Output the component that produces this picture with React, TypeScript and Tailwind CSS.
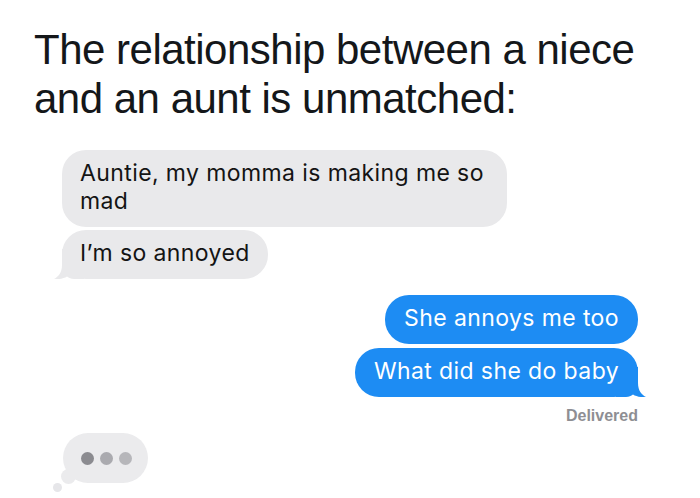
import React from "react";

const GRAY = "#e9e9eb";
const BLUE = "#1d8cf3";

function Tail({ color, side }: { color: string; side: "left" | "right" }) {
  return (
    <svg
      className={`absolute bottom-0 w-[30px] h-[30px] ${side === "left" ? "left-[-8px]" : "right-[-8px] -scale-x-100"}`}
      viewBox="0 0 30 30"
    >
      <path d="M8 0H30V30H20C17 30 15 29 13 27.5C10 29.5 5 30.5 0 30C4 28 8 24 8 16Z" fill={color} />
    </svg>
  );
}

function Received({ children, tail, className = "" }: { children: React.ReactNode; tail?: boolean; className?: string }) {
  return (
    <div className={`relative self-start rounded-[24px] bg-[#e9e9eb] px-[18px] pt-[9px] pb-[12px] text-[#141414] ${className}`}>
      {tail && <Tail color={GRAY} side="left" />}
      <span className="relative">{children}</span>
    </div>
  );
}

function Sent({ children, tail, className = "" }: { children: React.ReactNode; tail?: boolean; className?: string }) {
  return (
    <div className={`relative self-end rounded-[24px] bg-[#1d8cf3] px-[19px] pt-[9px] pb-[12px] text-white ${className}`}>
      {tail && <Tail color={BLUE} side="right" />}
      <span className="relative">{children}</span>
    </div>
  );
}

export default function App() {
  return (
    <div className="w-[700px] h-[498px] overflow-hidden bg-white">
      <h1
        className="pl-[34px] pt-[25px] text-[42px] leading-[49px] tracking-[-0.5px] text-[#14171a] font-normal"
        style={{ fontFamily: '"Liberation Sans", Arial, sans-serif' }}
      >
        The relationship between a niece
        <br />
        and an aunt is unmatched:
      </h1>

      <div
        className="flex flex-col px-[62px] pt-[27px] text-[23px] leading-[28px] tracking-[0.4px]"
        style={{ fontFamily: 'Inter, "Noto Sans", sans-serif' }}
      >
        <Received className="w-[445px]">Auntie, my momma is making me so mad</Received>
        <Received tail className="mt-[3px]">I’m so annoyed</Received>

        <Sent className="mt-[16px]">She annoys me too</Sent>
        <Sent tail className="mt-[4px]">What did she do baby</Sent>

        <div
          className="self-end mt-[9px] text-[16px] leading-[20px] font-bold text-[#8e8e93] tracking-normal"
          style={{ fontFamily: '"Liberation Sans", Arial, sans-serif' }}
        >
          Delivered
        </div>

        {/* typing indicator */}
        <div className="relative self-start mt-[7px] ml-px w-[85px] h-[50px]">
          <span className="absolute left-[-2px] top-[36px] w-[15px] h-[15px] rounded-full bg-[#ebebed]" />
          <span className="absolute left-[-10px] top-[50px] w-[9px] h-[9px] rounded-full bg-[#e6e6e9]" />
          <div className="relative flex items-center gap-[6px] w-full h-full rounded-full bg-[#ebebed] pl-[18px]">
            <span className="w-[13px] h-[13px] rounded-full bg-[#8b8b90]" />
            <span className="w-[13px] h-[13px] rounded-full bg-[#aaaaaf]" />
            <span className="w-[13px] h-[13px] rounded-full bg-[#b6b6ba]" />
          </div>
        </div>
      </div>
    </div>
  );
}
